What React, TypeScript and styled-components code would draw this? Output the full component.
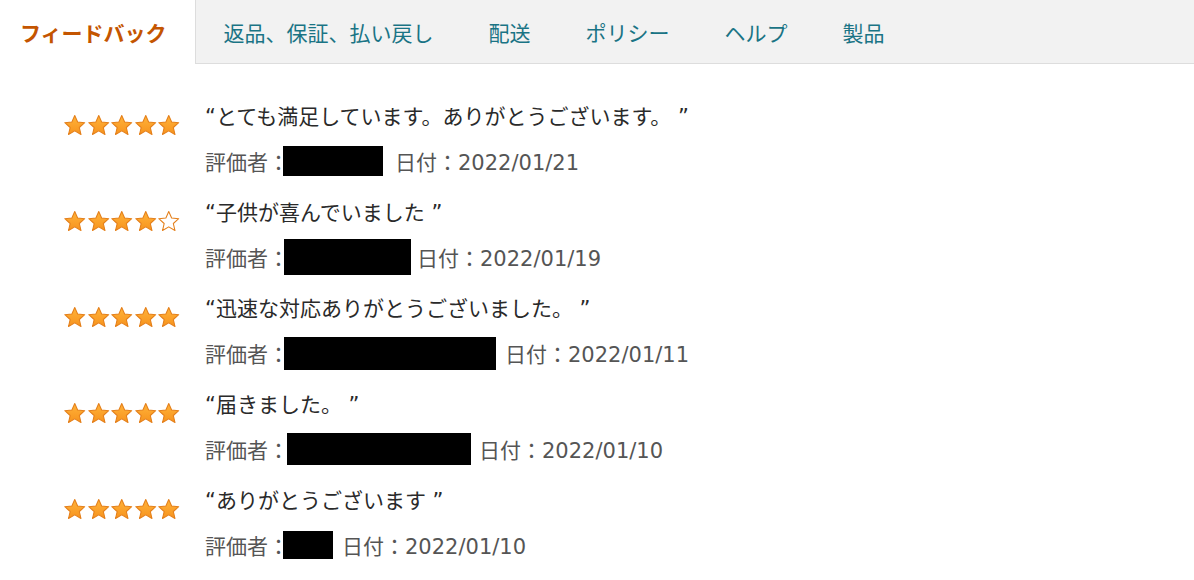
import { FC } from "react";
import styled, { createGlobalStyle } from "styled-components";

const GlobalStyle = createGlobalStyle`
	body {
		margin: 0;
		background: #fff;
		font-family: "DejaVu Sans", "Noto Sans CJK JP", sans-serif;
	}
`;

const StyledNav = styled.nav`
	display: flex;
	height: 64px;
`;

const StyledActiveTab = styled.div`
	display: flex;
	align-items: center;
	padding: 0 28px 0 20px;
	background: #fff;
	color: #c45500;
	font-size: 21px;
	font-weight: 700;
	font-family: "Noto Sans CJK JP", sans-serif;
`;

const StyledTabRest = styled.div`
	flex: 1;
	display: flex;
	background: #f2f2f2;
	border-left: 1px solid #dddddd;
	border-bottom: 1px solid #dddddd;
`;

const StyledTab = styled.div`
	display: flex;
	align-items: center;
	padding: 0 27px 0 28px;
	color: #1a7485;
	font-size: 21px;
	font-family: "Noto Sans CJK JP", sans-serif;
`;

const StyledList = styled.ul`
	list-style: none;
	margin: 33px 0 0;
	padding: 0 0 0 63px;
`;

const StyledRow = styled.li`
	display: flex;
	height: 96px;
`;

const StyledStars = styled.div`
	display: flex;
	width: 142px;
	padding-top: 17px;
	align-items: flex-start;
`;

const StyledBody = styled.div`
	display: flex;
	flex-direction: column;
	font-size: 21px;
`;

const StyledQuote = styled.div`
	height: 40px;
	line-height: 40px;
	color: #2a2a2a;
`;

const StyledMeta = styled.div`
	display: flex;
	align-items: center;
	height: 48px;
	color: #555;
`;

const StyledRedacted = styled.span<{ w: number; h: number; left: number; right: number }>`
	display: inline-block;
	width: ${(p) => p.w}px;
	height: ${(p) => p.h}px;
	margin-left: ${(p) => p.left}px;
	margin-right: ${(p) => p.right}px;
	background: #000;
`;

const Star: FC<{ filled: boolean }> = ({ filled }) => (
	<svg width="23.5" height="23" viewBox="0 0 24 24">
		<defs>
			<linearGradient id="starFill" x1="0" y1="0" x2="0" y2="1">
				<stop offset="0" stopColor="#ffb339" />
				<stop offset="1" stopColor="#f7931e" />
			</linearGradient>
		</defs>
		<polygon
			points="12,1.6 15,8.4 22.4,9.1 16.8,14.1 18.5,21.4 12,17.6 5.5,21.4 7.2,14.1 1.6,9.1 9,8.4"
			fill={filled ? "url(#starFill)" : "#fff"}
			stroke="#e47f1a"
			strokeWidth="1.1"
			strokeLinejoin="round"
		/>
	</svg>
);

interface IReview {
	rating: number;
	text: string;
	date: string;
	box: { w: number; h: number; left: number; right: number };
}

const reviews: IReview[] = [
	{
		rating: 5,
		text: "“とても満足しています。ありがとうございます。 ”",
		date: "2022/01/21",
		box: { w: 100, h: 30, left: -6, right: 12 },
	},
	{
		rating: 4,
		text: "“子供が喜んでいました ”",
		date: "2022/01/19",
		box: { w: 127, h: 36, left: -5, right: 6 },
	},
	{
		rating: 5,
		text: "“迅速な対応ありがとうございました。 ”",
		date: "2022/01/11",
		box: { w: 212, h: 33, left: -5, right: 9 },
	},
	{
		rating: 5,
		text: "“届きました。 ”",
		date: "2022/01/10",
		box: { w: 184, h: 32, left: -2, right: 8 },
	},
	{
		rating: 5,
		text: "“ありがとうございます ”",
		date: "2022/01/10",
		box: { w: 50, h: 28, left: -6, right: 9 },
	},
];

const tabs = ["返品、保証、払い戻し", "配送", "ポリシー", "ヘルプ", "製品"];

const App: FC = () => {
	return (
		<>
			<GlobalStyle />
			<StyledNav>
				<StyledActiveTab>フィードバック</StyledActiveTab>
				<StyledTabRest>
					{tabs.map((tab) => (
						<StyledTab key={tab}>{tab}</StyledTab>
					))}
				</StyledTabRest>
			</StyledNav>
			<StyledList>
				{reviews.map((review, i) => (
					<StyledRow key={i}>
						<StyledStars>
							{[0, 1, 2, 3, 4].map((n) => (
								<Star key={n} filled={n < review.rating} />
							))}
						</StyledStars>
						<StyledBody>
							<StyledQuote>{review.text}</StyledQuote>
							<StyledMeta>
								<span>評価者：</span>
								<StyledRedacted {...review.box} />
								<span>日付：{review.date}</span>
							</StyledMeta>
						</StyledBody>
					</StyledRow>
				))}
			</StyledList>
		</>
	);
};

export default App;
